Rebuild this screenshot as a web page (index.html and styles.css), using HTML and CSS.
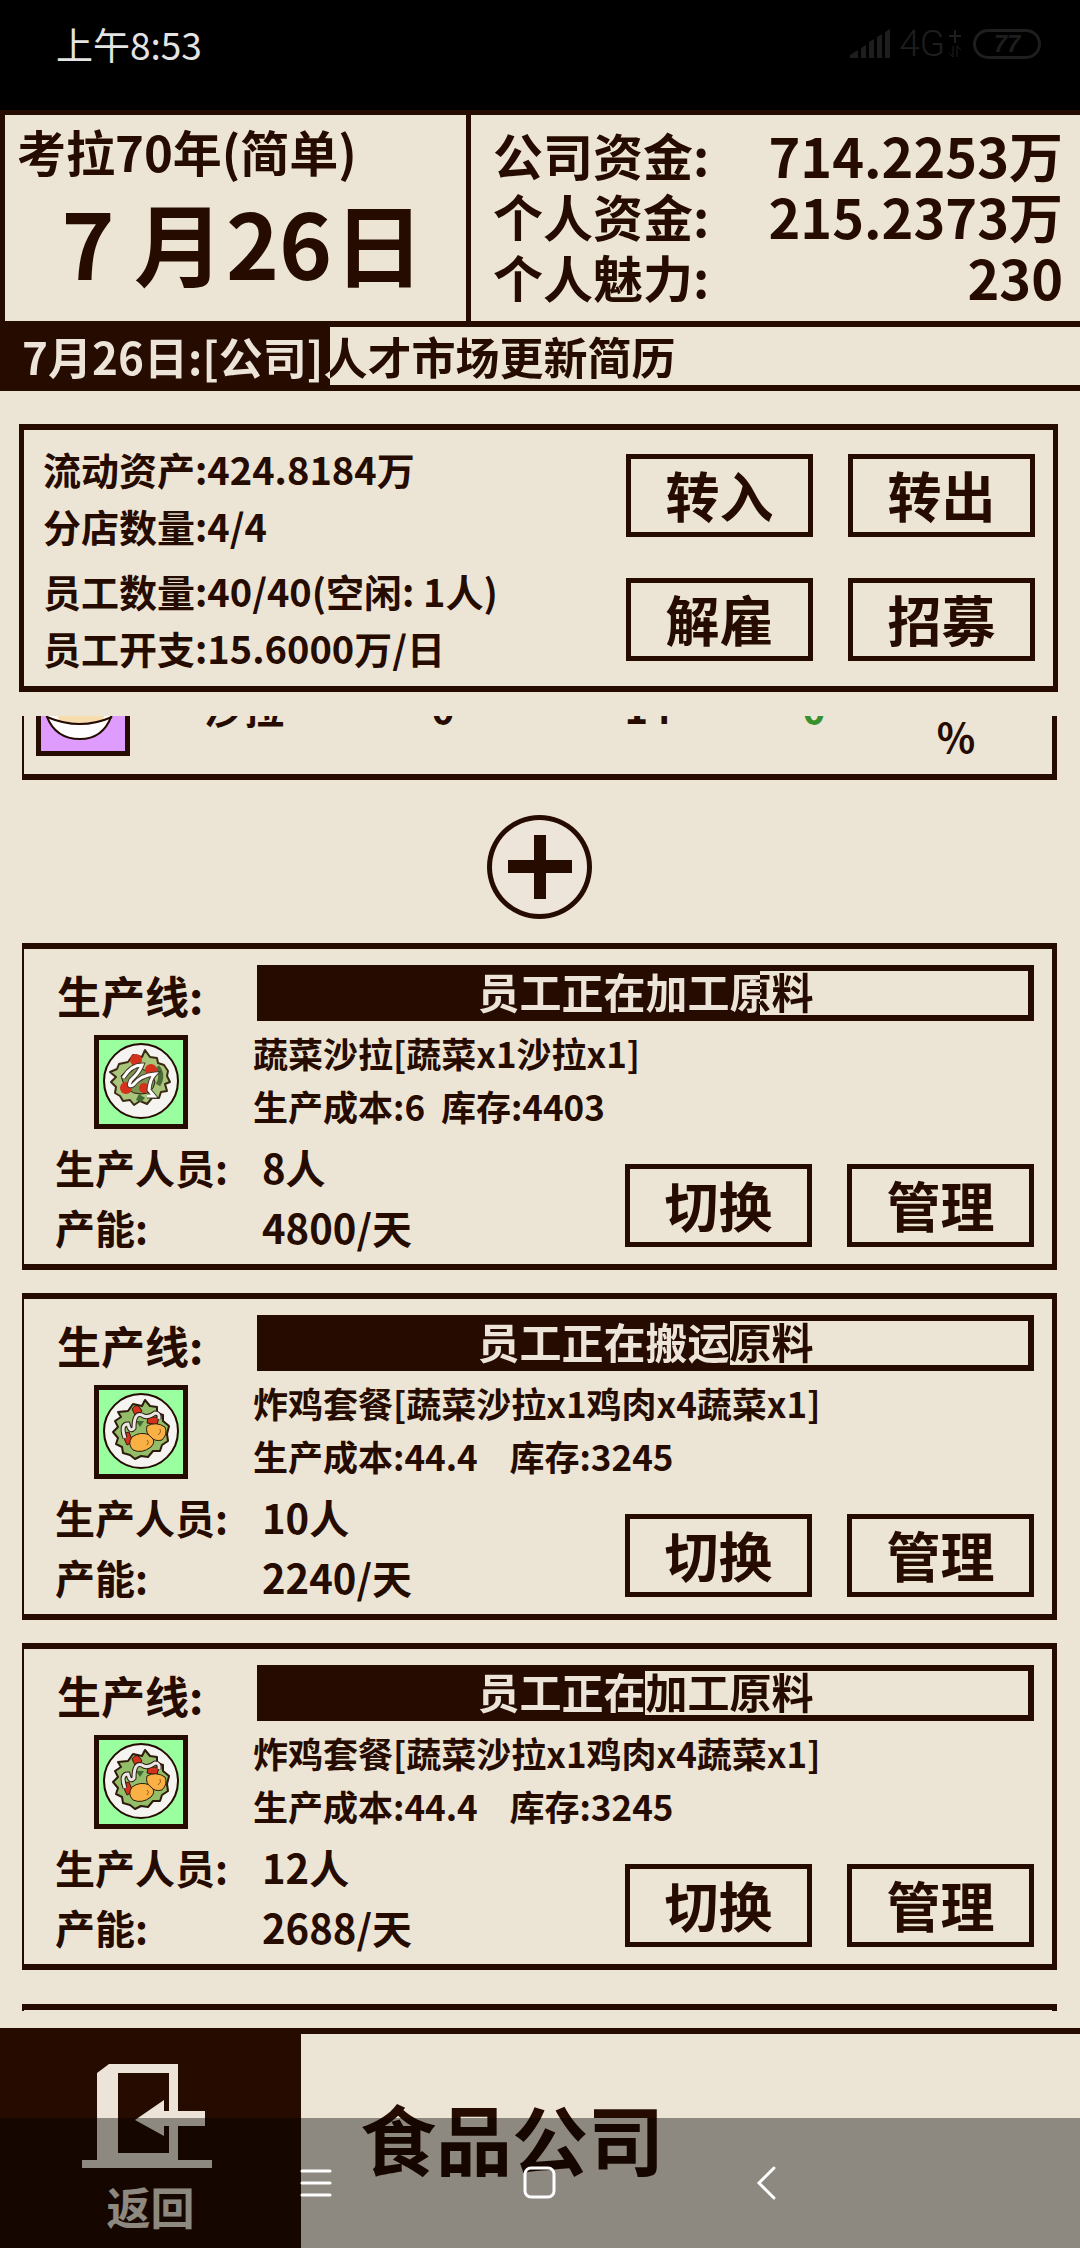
FILE: index.html
```html
<!DOCTYPE html>
<html lang="zh-CN">
<head>
    <meta charset="UTF-8">
    <meta name="viewport" content="width=device-width, initial-scale=1.0">
    <title>食品公司</title>
    <link rel="stylesheet" href="styles.css">
</head>
<body>
    <!-- 图标 -->
    <svg class="defs" aria-hidden="true">
        <symbol id="salad" viewBox="0 0 84 84">
            <circle cx="42" cy="41" r="37" fill="#f6f4f0" stroke="#260b00" stroke-width="2"/>
            <path d="M20 24 l9 -2 5 -7 9 2 3 -7 5 7 7 1 1 5 6 2 4 6 -1 5 3 6 -5 2 2 7 -6 1 -2 6 -7 0 -5 6 -7 -3 -6 4 -4 -5 -7 1 -3 -5 -5 -3 1 -6 -5 -5 5 -5 -6 -5 7 -3z" fill="#a9c47b" stroke="#3a2a14" stroke-width="2" stroke-linejoin="round"/>
            <path d="M22 36 q8 -9 18 -8 q14 4 16 14 q-2 12 -14 12 q-16 0 -20 -18z" fill="#7b9650" stroke="#2c1a0c" stroke-width="1"/>
            <path d="M58 27 q7 8 1 18" fill="none" stroke="#4c6b37" stroke-width="5"/>
            <circle cx="37" cy="20" r="6" fill="#d4321d"/>
            <circle cx="52" cy="30" r="6" fill="#d4321d"/>
            <circle cx="27" cy="48" r="6" fill="#d4321d"/>
            <circle cx="45" cy="48" r="5" fill="#d4321d"/>
            <path d="M40 54 l6 4 -4 4 -5 -2z" fill="#3f6a34"/>
            <path d="M24 38 Q32 25 43 25 Q40 33 32 40 Q28 48 34 45 Q42 35 56 34 Q51 39 50 50 L55 56 H48" fill="none" stroke="#4a3a2c" stroke-width="5"/>
            <path d="M24 38 Q32 25 43 25 Q40 33 32 40 Q28 48 34 45 Q42 35 56 34 Q51 39 50 50 L55 56 H48" fill="none" stroke="#fff" stroke-width="3"/>
        </symbol>
        <symbol id="chicken" viewBox="0 0 84 84">
            <circle cx="42" cy="41" r="37" fill="#f6f4f0" stroke="#260b00" stroke-width="2"/>
            <path d="M19 22 l10 -1 5 -7 9 2 3 -6 5 6 7 1 0 6 6 2 0 6 6 5 -2 8 1 7 -6 4 -2 6 -7 0 -5 6 -7 -1 -6 3 -5 -4 -7 -2 -1 -6 -6 -3 2 -6 -5 -6 5 -5 -3 -6 6 -4z" fill="#93bd68" stroke="#2c1a0c" stroke-width="2" stroke-linejoin="round"/>
            <path d="M33 19 q5 -8 10 2 l-6 6z M49 27 l11 0 -2 8 -10 -2z M23 44 l7 -2 4 10 -6 3z" fill="#d4321d" stroke="#2c1a0c" stroke-width="1"/>
            <path d="M37 31 l8 0 -4 6z" fill="#3d6a34"/>
            <path d="M33 47 q8 -6 18 -2 q7 6 1 12 q-9 7 -18 3 q-6 -6 -1 -13z" fill="#f9b145" stroke="#2c1a0c" stroke-width="1"/>
            <path d="M48 36 q9 -5 18 1 q3 7 -3 13 q-7 2 -11 -3 q-6 -4 -4 -11z" fill="#f9b145" stroke="#2c1a0c" stroke-width="1"/>
            <path d="M61 39 q2 3 -2 6 M48 50 q3 2 0 5" fill="none" stroke="#9b5a18" stroke-width="1"/>
            <path d="M26 48 Q21 34 29 34 Q31 43 35 38 Q35 22 43 25 Q48 29 56 23 Q61 23 60 29" fill="none" stroke="#2c1a0c" stroke-width="5"/>
            <path d="M26 48 Q21 34 29 34 Q31 43 35 38 Q35 22 43 25 Q48 29 56 23 Q61 23 60 29" fill="none" stroke="#e9e6e6" stroke-width="3"/>
        </symbol>
        <symbol id="bowl" viewBox="0 0 84 84">
            <path d="M3 40 Q10 72 39 72 Q66 72 73 40z" fill="#fff" stroke="#260b00" stroke-width="2"/>
            <path d="M14 40 L18 53 Q39 59 62 53 L66 40z" fill="#f7dcae"/>
            <path d="M6 50 Q39 64 71 50" fill="none" stroke="#260b00" stroke-width="2"/>
        </symbol>
    </svg>

    <div class="status">
        <span class="time">上午8:53</span>
        <div class="signal">
            <svg width="42" height="30" viewBox="0 0 42 30" fill="#1e1e1e"><path d="M0 29 v-3 l8 -5 v8z M11 29 V19 l5 -3 v13z M19 29 V13 l5 -3 v19z M27 29 V8 l5 -3 v24z M35 29 V3 l5 -3 v29z"/></svg>
            <span class="net">4G</span>
            <svg width="14" height="30" viewBox="0 0 14 30" fill="none" stroke="#1e1e1e" stroke-width="2"><path d="M7 1 v13 M1 7 h12"/><path d="M5 17 v11 l-4 -4 M9 28 V17 l4 4" stroke-width="1"/></svg>
            <span class="battery">77</span>
        </div>
    </div>

    <header class="top">
        <div class="date">
            <p class="year">考拉70年(简单)</p>
            <p class="day"><span class="num">7</span><span>月</span><span class="num">26</span><span>日</span></p>
        </div>
        <dl class="money">
            <div><dt>公司资金:</dt><dd>714.2253万</dd></div>
            <div><dt>个人资金:</dt><dd>215.2373万</dd></div>
            <div><dt>个人魅力:</dt><dd>230</dd></div>
        </dl>
    </header>

    <!-- 新闻 -->
    <div class="news">
        <p class="news-text">7月26日:[公司]人才市场更新简历</p>
    </div>

    <section class="panel">
        <div class="info">
            <p>流动资产:424.8184万</p>
            <p>分店数量:4/4</p>
            <p class="staff">员工数量:40/40(空闲: 1人)</p>
            <p>员工开支:15.6000万/日</p>
        </div>
        <div class="actions">
            <button type="button">转入</button>
            <button type="button">转出</button>
            <button type="button">解雇</button>
            <button type="button">招募</button>
        </div>
    </section>

    <main class="list">
        <section class="card goods">
            <svg class="food purple"><use href="#bowl"/></svg>
            <span>沙拉</span>
            <span>0</span>
            <span>14</span>
            <span class="up">0</span>
            <span class="rate">%</span>
        </section>

        <button type="button" class="add" aria-label="+">
            <svg width="66" height="66" viewBox="0 0 66 66" fill="#260b00"><path d="M27 1 h12 v25 h26 v13 h-26 v26 h-12 v-26 h-26 v-13 h26z"/></svg>
        </button>

        <section class="card">
            <div class="line">
                <div class="kind">
                    <h2>生产线:</h2>
                    <svg class="food"><use href="#salad"/></svg>
                </div>
                <div class="detail">
                    <div class="bar" style="--done: 65%"><p>员工正在加工原料</p></div>
                    <p>蔬菜沙拉[蔬菜x1沙拉x1]</p>
                    <p>生产成本:6  库存:4403</p>
                </div>
            </div>
            <div class="line">
                <dl class="stats">
                    <dt>生产人员:</dt><dd>8人</dd>
                    <dt>产能:</dt><dd>4800/天</dd>
                </dl>
                <div class="actions">
                    <button type="button">切换</button>
                    <button type="button">管理</button>
                </div>
            </div>
        </section>

        <section class="card">
            <div class="line">
                <div class="kind">
                    <h2>生产线:</h2>
                    <svg class="food"><use href="#chicken"/></svg>
                </div>
                <div class="detail">
                    <div class="bar" style="--done: 61%"><p>员工正在搬运原料</p></div>
                    <p>炸鸡套餐[蔬菜沙拉x1鸡肉x4蔬菜x1]</p>
                    <p>生产成本:44.4    库存:3245</p>
                </div>
            </div>
            <div class="line">
                <dl class="stats">
                    <dt>生产人员:</dt><dd>10人</dd>
                    <dt>产能:</dt><dd>2240/天</dd>
                </dl>
                <div class="actions">
                    <button type="button">切换</button>
                    <button type="button">管理</button>
                </div>
            </div>
        </section>

        <section class="card">
            <div class="line">
                <div class="kind">
                    <h2>生产线:</h2>
                    <svg class="food"><use href="#chicken"/></svg>
                </div>
                <div class="detail">
                    <div class="bar" style="--done: 50%"><p>员工正在加工原料</p></div>
                    <p>炸鸡套餐[蔬菜沙拉x1鸡肉x4蔬菜x1]</p>
                    <p>生产成本:44.4    库存:3245</p>
                </div>
            </div>
            <div class="line">
                <dl class="stats">
                    <dt>生产人员:</dt><dd>12人</dd>
                    <dt>产能:</dt><dd>2688/天</dd>
                </dl>
                <div class="actions">
                    <button type="button">切换</button>
                    <button type="button">管理</button>
                </div>
            </div>
        </section>

        <section class="card next"></section>
    </main>

    <footer class="bottom">
        <button type="button" class="back">
            <svg width="130" height="104" viewBox="0 0 130 104" fill="#ece4d8">
                <path fill-rule="evenodd" d="M15 9 L27 0 H96 V47 H123 V62 H96 V96 H130 V104 H0 V96 H15z M36 9 V89 H87 V62 H82 V72 L53 56 L82 36 V47 H87 V9z"/>
            </svg>
            返回
        </button>
        <h1>食品公司</h1>
    </footer>

    <!-- 系统导航栏 -->
    <nav class="nav">
        <button type="button" aria-label="菜单"><svg viewBox="0 0 36 36"><path d="M5 6 h28 M5 18 h28 M5 30 h28"/></svg></button>
        <button type="button" aria-label="主页"><svg viewBox="0 0 36 36"><rect x="3" y="3" width="29" height="29" rx="6"/></svg></button>
        <button type="button" aria-label="后退"><svg viewBox="0 0 36 36"><path d="M27 3 L12 18 L27 33"/></svg></button>
    </nav>
</body>
</html>
```
FILE: styles.css
```css
* {
    box-sizing: border-box;
}
body {
    margin: 0;
    height: 100vh;
    display: flex;
    flex-direction: column;
    overflow: hidden;
    background-color: #ece5d5;
    color: #260b00;
    font-family: "Noto Sans CJK SC", "Noto Sans", sans-serif;
    font-weight: bold;
}
p, h1, h2, dl, dt, dd {
    margin: 0;
    font-size: inherit;
}
button {
    padding: 0 0 2px;
    border: 5px solid #260b00;
    background: none;
    color: #260b00;
    font: inherit;
}
.defs {
    display: none;
}

/* 状态栏 */
.status {
    display: flex;
    justify-content: space-between;
    height: 110px;
    padding: 17px 39px 0 56px;
    background-color: #000;
    color: #e4e4e4;
    font-size: 37px;
    line-height: 54px;
    font-weight: normal;
}
.signal {
    display: flex;
    align-items: center;
    height: 54px;
    color: #1e1e1e;
}
.net {
    margin: 0 3px 0 7px;
    font-family: Roboto, sans-serif;
    font-weight: 300;
}
.battery {
    width: 68px;
    height: 30px;
    margin-left: 11px;
    border: 3px solid #1e1e1e;
    border-radius: 15px;
    font: italic bold 24px/24px "Liberation Sans", sans-serif;
    text-align: center;
}

/* 顶部 */
.top {
    display: flex;
    border-top: 5px solid #260b00;
    border-bottom: 6px solid #260b00;
}
.date {
    flex: 0 0 471px;
    height: 206px;
    border-left: 5px solid #260b00;
    border-right: 5px solid #260b00;
    padding: 0 12px;
}
.year {
    font-size: 49px;
    line-height: 72px;
}
.day {
    display: flex;
    padding-left: 25px;
    font-size: 90px;
    line-height: 108px;
}
.num {
    width: 110px;
    text-align: center;
}
.num:first-child {
    width: 92px;
}
.money {
    flex: 1;
    padding: 9px 17px 0 22px;
}
.money div {
    display: flex;
    justify-content: space-between;
    line-height: 61px;
}
.money dt {
    font-size: 50px;
}
.money dd {
    font-size: 54px;
}

.news {
    border-bottom: 6px solid #260b00;
    background: linear-gradient(90deg, #260b00 330px, transparent 330px);
    font-size: 44px;
    line-height: 58px;
}
.news-text {
    padding-left: 22px;
    background: linear-gradient(90deg, #ece4d8 330px, #260b00 330px);
    -webkit-background-clip: text;
    background-clip: text;
    color: transparent;
}

/* 公司信息 */
.panel {
    display: flex;
    justify-content: space-between;
    margin: 33px 22px 24px 19px;
    padding: 10px 18px 10px 19px;
    border: 6px solid #260b00;
    border-width: 6px 5px;
}
.info {
    font-size: 38px;
    line-height: 57px;
}
.staff {
    margin-top: 8px;
}
.actions {
    display: grid;
    grid-template-columns: 187px 187px;
    align-content: start;
    gap: 41px 35px;
    padding-top: 14px;
}
.actions button {
    height: 83px;
    font-size: 54px;
    line-height: 70px;
}

/* 列表 */
.list {
    flex: 1;
    min-height: 0;
    margin: 0 23px 17px 22px;
    overflow-y: auto;
    scrollbar-width: none;
}
.card {
    margin-bottom: 23px;
    padding: 16px 18px 7px 31px;
    border: 6px solid #260b00;
    border-left-width: 2px;
    border-right-width: 5px;
}
.goods {
    display: grid;
    grid-template-columns: 94px 228px 170px 240px 92px 1fr;
    align-items: start;
    height: 126px;
    margin: -62px 0 35px;
    padding: 2px 0 0 12px;
    font-size: 40px;
    line-height: 58px;
    text-align: center;
}
.goods span {
    padding-top: 16px;
}
.goods .rate {
    padding-top: 45px;
}
.add {
    display: flex;
    align-items: center;
    justify-content: center;
    width: 105px;
    height: 104px;
    margin: 0 auto 24px;
    padding: 0;
    border-radius: 50%;
    background-color: #ede4da;
}
.line {
    display: flex;
}
.kind {
    flex: 0 0 198px;
}
.kind h2 {
    padding-left: 2px;
    font-size: 44px;
    line-height: 60px;
}
.food {
    display: block;
    width: 94px;
    height: 94px;
    border: 5px solid #260b00;
    background-color: #99ff9f;
}
.kind .food {
    margin: 10px 0 0 39px;
}
.purple {
    background-color: #df9cff;
}
.detail {
    flex: 1;
    height: 172px;
    font-size: 35px;
    line-height: 53px;
}
.detail p {
    white-space: pre;
}
.bar {
    margin: 0 0 5px 4px;
    border: 6px solid #260b00;
    background: linear-gradient(90deg, #260b00 var(--done), transparent var(--done));
    font-size: 42px;
    line-height: 40px;
    text-align: center;
}
.bar p {
    padding-bottom: 4px;
    background: linear-gradient(90deg, #ece4d8 var(--done), #260b00 var(--done));
    -webkit-background-clip: text;
    background-clip: text;
    color: transparent;
}
.stats {
    flex: 1;
    display: grid;
    grid-template-columns: 207px 1fr;
    font-size: 40px;
    line-height: 60px;
}
.line .actions {
    padding-top: 27px;
}
.up {
    color: #37912b;
}
.next {
    margin-top: 34px;
    height: 327px;
}

/* 底部 */
.bottom {
    display: flex;
    border-top: 6px solid #260b00;
}
.back {
    display: flex;
    flex-direction: column;
    align-items: center;
    width: 301px;
    height: 214px;
    padding: 30px 0 0;
    border: 0;
    background-color: #260b00;
    color: #ece4d8;
    font-size: 44px;
    line-height: 76px;
}
.back svg {
    margin-right: 8px;
}
.bottom h1 {
    padding-left: 59px;
    font-size: 76px;
    line-height: 206px;
}
.nav {
    position: fixed;
    left: 0;
    right: 0;
    bottom: 0;
    display: flex;
    align-items: center;
    justify-content: center;
    gap: 189px;
    height: 130px;
    background-color: rgba(0, 0, 0, 0.4);
}
.nav button {
    padding: 0;
    border: 0;
    width: 36px;
    height: 36px;
}
.nav svg {
    display: block;
    fill: none;
    stroke: #fff;
    stroke-width: 3;
    stroke-linecap: round;
}
```
